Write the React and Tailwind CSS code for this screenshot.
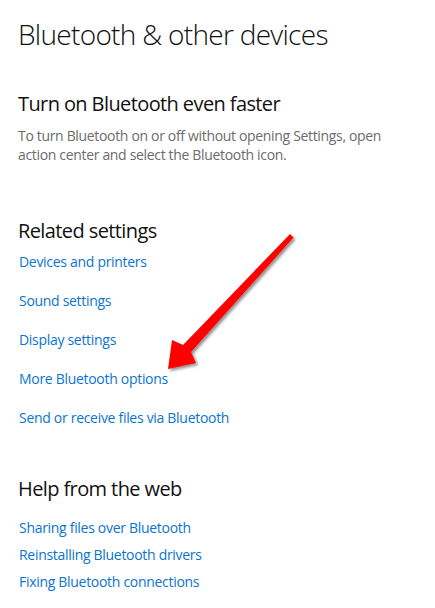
import React from "react";

const related = [
  "Devices and printers",
  "Sound settings",
  "Display settings",
  "More Bluetooth options",
  "Send or receive files via Bluetooth",
];
const help = [
  "Sharing files over Bluetooth",
  "Reinstalling Bluetooth drivers",
  "Fixing Bluetooth connections",
];

export default function App() {
  return (
    <div
      className="relative w-[435px] h-[608px] bg-white overflow-hidden pl-[18px] pt-[16px]"
      style={{ fontFamily: '"Open Sans", "Noto Sans", sans-serif' }}
    >
      <h1 className="text-[28px] leading-[36px] font-light tracking-[-0.7px] text-[#111]">
        Bluetooth &amp; other devices
      </h1>

      <h2 className="mt-[38px] text-[20px] leading-[28px] font-normal tracking-[-0.6px] text-[#111]">
        Turn on Bluetooth even faster
      </h2>
      <p className="mt-[8px] text-[14px] leading-[19px] tracking-[-0.33px] text-[#6b6b6b]">
        To turn Bluetooth on or off without opening Settings, open
        <br />
        action center and select the Bluetooth icon.
      </p>

      <h2 className="mt-[53px] text-[20px] leading-[28px] font-normal tracking-[-0.6px] text-[#111]">
        Related settings
      </h2>
      <div className="mt-[7px] flex flex-col gap-[20px] pl-px">
        {related.map((t) => (
          <a key={t} className="text-[14px] leading-[19px] tracking-[-0.3px] text-[#0a74d0] w-fit">
            {t}
          </a>
        ))}
      </div>

      <h2 className="mt-[48px] text-[20px] leading-[28px] font-normal tracking-[-0.6px] text-[#111]">
        Help from the web
      </h2>
      <div className="mt-[15px] flex flex-col gap-[8px] pl-px">
        {help.map((t) => (
          <a key={t} className="text-[14px] leading-[19px] tracking-[-0.3px] text-[#0a74d0] w-fit">
            {t}
          </a>
        ))}
      </div>

      <svg
        className="absolute left-0 top-0 pointer-events-none"
        width="435"
        height="608"
        viewBox="0 0 435 608"
      >
        <defs>
          <filter id="sh" x="-20%" y="-20%" width="140%" height="140%">
            <feGaussianBlur in="SourceAlpha" stdDeviation="1.5" />
            <feOffset dx="2" dy="2" result="b" />
            <feComponentTransfer>
              <feFuncA type="linear" slope="0.45" />
            </feComponentTransfer>
            <feMerge>
              <feMergeNode />
              <feMergeNode in="SourceGraphic" />
            </feMerge>
          </filter>
        </defs>
        <polygon
          filter="url(#sh)"
          fill="#ff0000"
          points="290,234 293.5,237.5 191,352 196,363 168,369 172,340 183,345"
        />
      </svg>
    </div>
  );
}
